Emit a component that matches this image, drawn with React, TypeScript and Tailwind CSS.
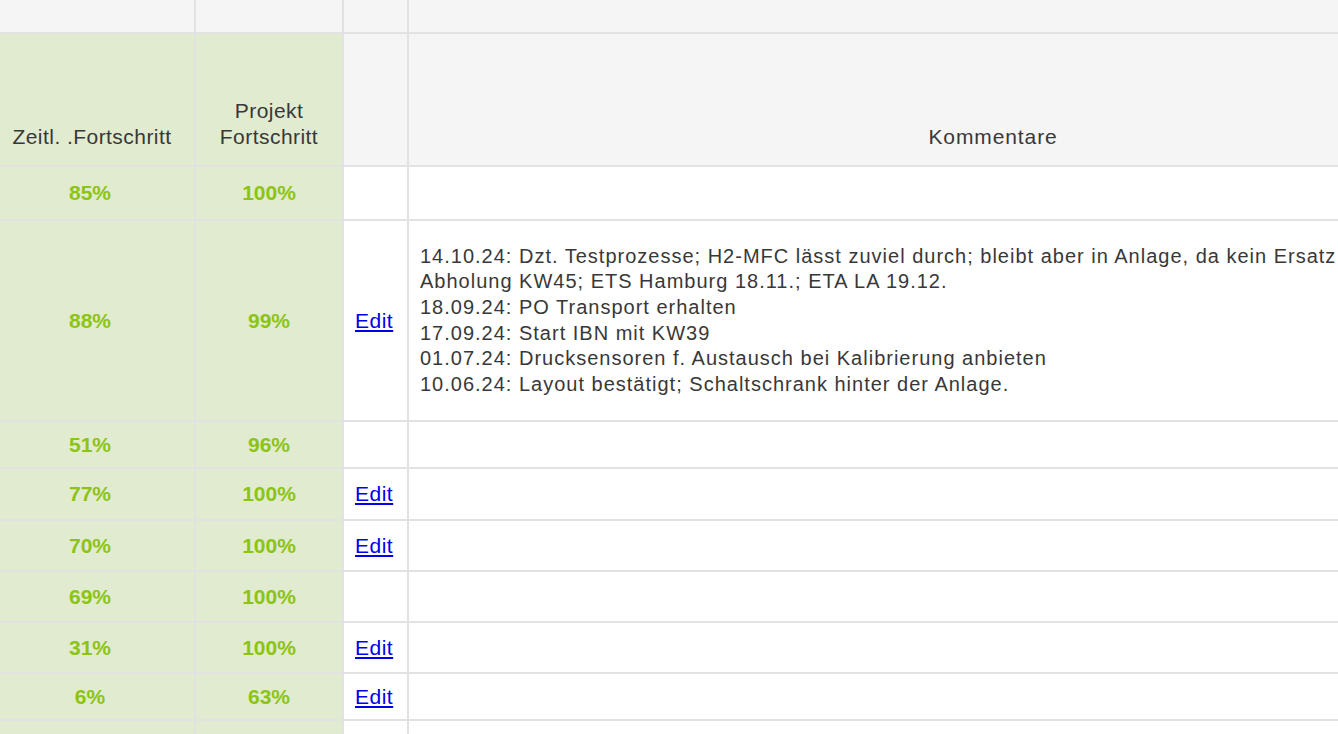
const rows = [
  { z: "85%", p: "100%", edit: false, h: "h-[52px]" },
  { z: "88%", p: "99%", edit: true, h: "h-[199px]", comments: true },
  { z: "51%", p: "96%", edit: false, h: "h-[45px]" },
  { z: "77%", p: "100%", edit: true, h: "h-[50px]" },
  { z: "70%", p: "100%", edit: true, h: "h-[49px]" },
  { z: "69%", p: "100%", edit: false, h: "h-[49px]" },
  { z: "31%", p: "100%", edit: true, h: "h-[49px]" },
  { z: "6%", p: "63%", edit: true, h: "h-[45px]" },
  { z: "", p: "", edit: false, h: "h-[40px]" },
];

const comments = [
  "14.10.24: Dzt. Testprozesse; H2-MFC lässt zuviel durch; bleibt aber in Anlage, da kein Ersatz",
  "Abholung KW45; ETS Hamburg 18.11.; ETA LA 19.12.",
  "18.09.24: PO Transport erhalten",
  "17.09.24: Start IBN mit KW39",
  "01.07.24: Drucksensoren f. Austausch bei Kalibrierung anbieten",
  "10.06.24: Layout bestätigt; Schaltschrank hinter der Anlage.",
];

export default function App() {
  return (
    <div
      className="w-[1338px] h-[734px] overflow-hidden bg-white text-[#383838]"
      style={{ fontFamily: '"Liberation Sans", Arial, sans-serif' }}
    >
      <div className="grid w-[1577px] grid-cols-[194px_146px_63px_1168px] gap-[2px] bg-[#e2e2e2]">
        {/* top filler row */}
        <div className="h-[32px] bg-[#f5f5f5]" />
        <div className="h-[32px] bg-[#f5f5f5]" />
        <div className="h-[32px] bg-[#f5f5f5]" />
        <div className="h-[32px] bg-[#f5f5f5]" />

        {/* header row */}
        <div className="h-[131px] bg-[#e1ebd0] flex items-end justify-center pr-[10px] pb-[15px] text-[21px] leading-[26px] tracking-[0.45px]">
          Zeitl. .Fortschritt
        </div>
        <div className="h-[131px] bg-[#e1ebd0] flex items-end justify-center pb-[15px] text-[21px] leading-[26px] tracking-[0.45px] text-center">
          Projekt
          <br />
          Fortschritt
        </div>
        <div className="h-[131px] bg-[#f5f5f5]" />
        <div className="h-[131px] bg-[#f5f5f5] flex items-end justify-center pb-[15px] text-[21px] leading-[26px] tracking-[0.9px]">
          Kommentare
        </div>

        {rows.map((r, i) => (
          <div key={i} className="contents">
            <div className={`${r.h} bg-[#e1ebd0] flex items-center justify-center pr-[14px] text-[21px] font-bold text-[#8cc414]`}>
              {r.z}
            </div>
            <div className={`${r.h} bg-[#e1ebd0] flex items-center justify-center text-[21px] font-bold text-[#8cc414]`}>
              {r.p}
            </div>
            <div className={`${r.h} bg-white flex items-center pl-[11px]`}>
              {r.edit && (
                <a href="#" className="text-[21px] tracking-[0.5px] text-[#0000ee] underline">
                  Edit
                </a>
              )}
            </div>
            <div className={`${r.h} bg-white flex items-center pl-[11px]`}>
              {r.comments && (
                <div className="text-[20px] leading-[25.6px] tracking-[1px] whitespace-nowrap">
                  {comments.map((c) => (
                    <div key={c}>{c}</div>
                  ))}
                </div>
              )}
            </div>
          </div>
        ))}
      </div>
    </div>
  );
}
